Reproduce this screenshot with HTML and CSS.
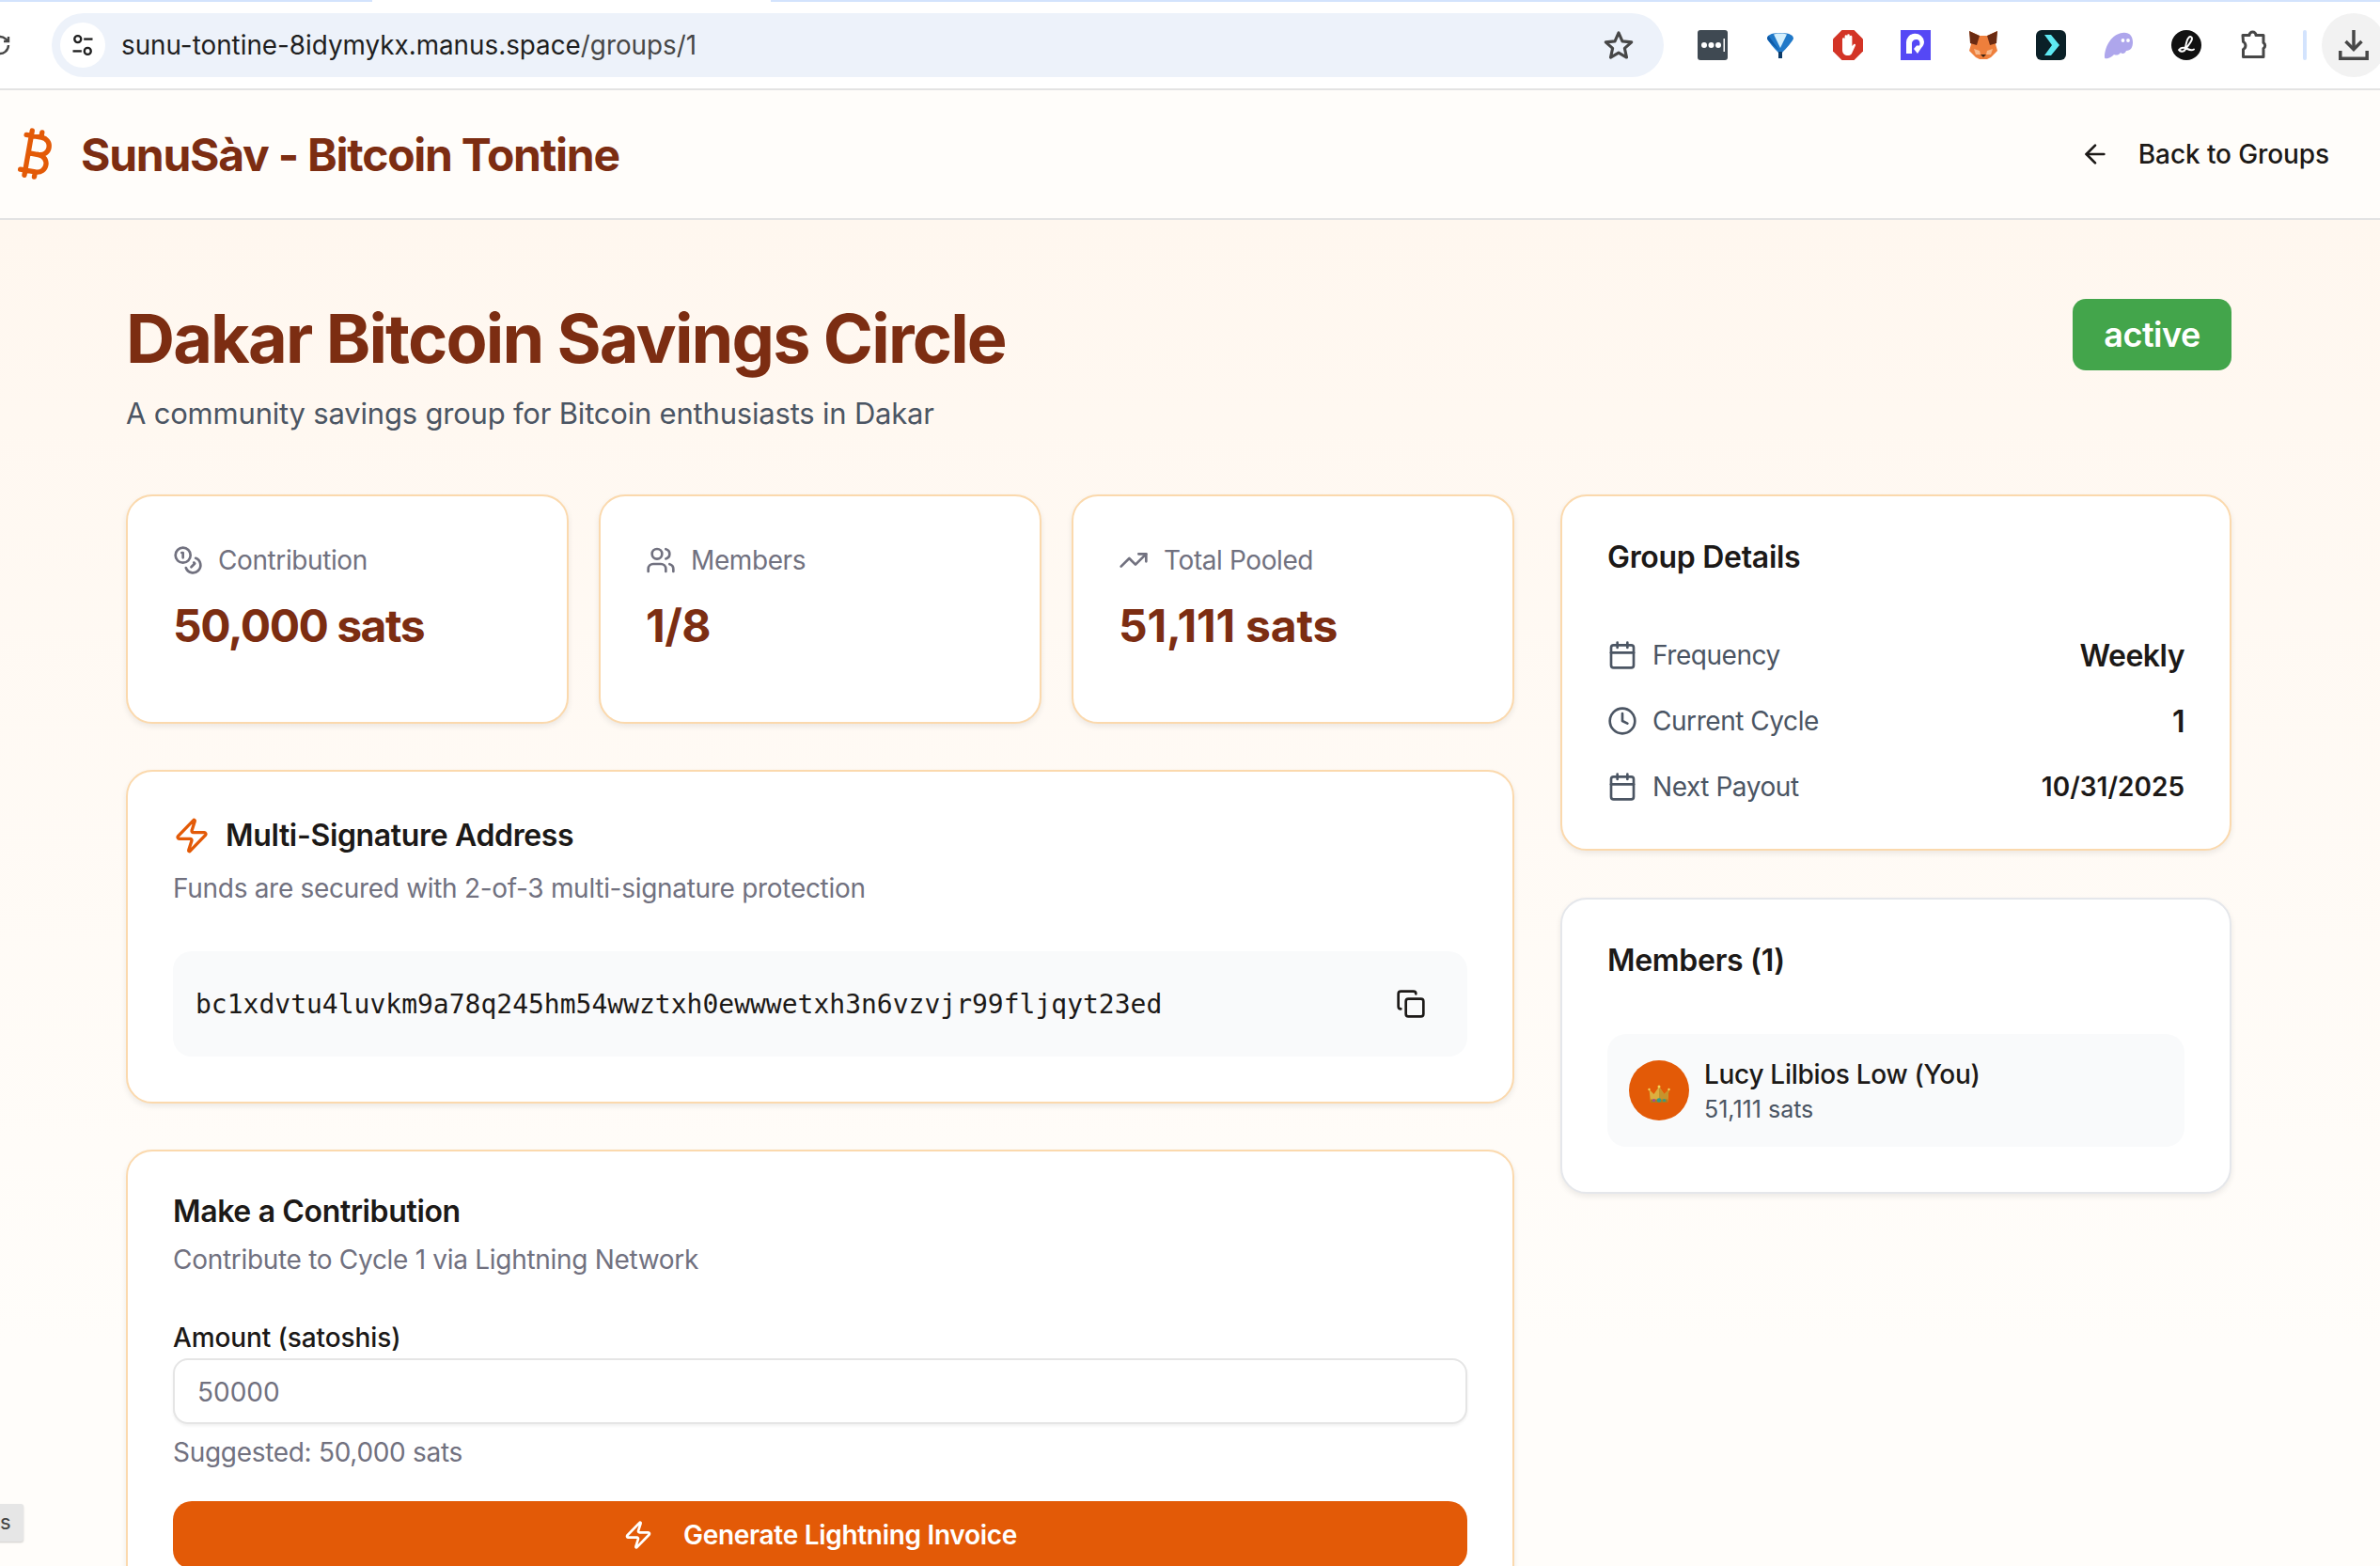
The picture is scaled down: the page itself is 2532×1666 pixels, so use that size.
FILE: index.html
```html
<!DOCTYPE html>
<html lang="en">
<head>
  <meta charset="UTF-8">
  <title>SunuSàv - Bitcoin Tontine</title>
  <link rel="stylesheet" href="styles.css">
</head>
<body>

  <!-- Browser toolbar -->
  <div class="tab-strip">
    <span class="tab-edge tab-edge-left"></span>
    <span class="tab-edge tab-edge-right"></span>
  </div>
  <div class="toolbar">
    <svg class="reload" viewBox="12 0 12 24" fill="none" stroke="#474747" stroke-width="2.4">
      <path d="M21 12a9 9 0 1 1-3-6.7L21 8"/><path d="M21 3v5h-5"/>
    </svg>
    <div class="address-bar">
      <span class="site-chip">
        <svg viewBox="0 0 24 24" fill="none" stroke="#1f1f1f" stroke-width="2">
          <circle cx="7.5" cy="6.5" r="3"/><path d="M13 6.5h8"/><circle cx="16.5" cy="17.5" r="3"/><path d="M3 17.5h8"/>
        </svg>
      </span>
      <span class="url">sunu-tontine-8idymykx.manus.space<span class="url-path">/groups/1</span></span>
      <svg class="star" viewBox="0 0 24 24" fill="none" stroke="#474747" stroke-width="2.2" stroke-linejoin="round">
        <path d="M12 2.8l2.8 6.3 6.9.7-5.2 4.6 1.5 6.8-6-3.5-6 3.5 1.5-6.8-5.2-4.6 6.9-.7z"/>
      </svg>
    </div>
    <div class="extensions">
      <svg viewBox="0 0 32 32">
        <rect width="32" height="32" rx="3" fill="#3f4952"/>
        <circle cx="7" cy="16" r="3" fill="#fff"/><circle cx="14.500" cy="16" r="3" fill="#fff"/><circle cx="22" cy="16" r="3" fill="#fff"/>
        <rect x="27.500" y="9" width="1.500" height="14" fill="#fff"/>
      </svg>
      <svg viewBox="0 0 32 32">
        <path d="M2 9c0-3 3-6 14-6s14 3 14 6c0 2-9 12-12 15v6h-4v-6C11 21 2 11 2 9z" fill="#1f78c8"/>
        <path d="M9 4.500c3-1.500 11-1.500 14 0L16 19z" fill="#d5effc"/>
        <path d="M2 9c0-1 .5-2 1.500-3L15 22C11 18 2 11 2 9z" fill="#0f5aa6"/>
        <path d="M14 23h4v7h-4z" fill="#0b3a68"/>
      </svg>
      <svg viewBox="0 0 32 32">
        <path d="M9.500 0h13L32 9.500v13L22.500 32h-13L0 22.500v-13z" fill="#d33426"/>
        <path d="M10 15V9.500a1.300 1.300 0 0 1 2.600 0V6.500a1.300 1.300 0 0 1 2.600 0V5.500a1.300 1.300 0 0 1 2.600 0v1.500a1.300 1.300 0 0 1 2.600 0V17l1.600-1.800c1.400-1 2.600.2 1.800 1.500L20 25c-1 1.500-2 2-4 2-3.500 0-6-2-6-6z" fill="#fff"/>
      </svg>
      <svg viewBox="0 0 32 32">
        <rect width="32" height="32" fill="#5548f5"/>
        <path d="M6 25V14a9.500 9.500 0 0 1 19-1.500c0 3-1.500 5-3 6.500l-4 6-4-5 3-3.500h3c1-2 .5-6-2.500-6.500-3-.5-5.500 1.500-5.500 4V25z" fill="#fff"/>
      </svg>
      <svg viewBox="0 0 32 32">
        <path d="M1 1l11 5h8l11-5-2 14 2 7-7 7-4 2h-8l-4-2-7-7 2-7z" fill="#ee7f3c"/>
        <path d="M1 1l11 5-3 10-7-2zM31 1L20 6l3 10 7-2z" fill="#6b2b12"/>
        <path d="M6 20l6 2 1 4-5 0zM26 20l-6 2-1 4 5 0z" fill="#f8b98c"/>
        <path d="M13 26h6l-3 3z" fill="#3a2415"/>
      </svg>
      <svg viewBox="0 0 32 32">
        <rect width="32" height="32" rx="6" fill="#0a2027"/>
        <path d="M9 5h7l9 11-9 11H9l8-11z" fill="#5ee9f2"/>
      </svg>
      <svg viewBox="0 0 32 32">
        <path d="M1 29c0-12 8-25 19-26 7-1 11 3 11 10 0 5-2 9-7 9-1 3-4 4-6 2-2 3-5 3-7 2-2 3-10 6-10 3z" fill="#aea6ec"/>
        <circle cx="20.500" cy="11" r="1.900" fill="#fff"/><circle cx="26" cy="11" r="1.900" fill="#fff"/>
      </svg>
      <svg viewBox="0 0 32 32">
        <circle cx="16" cy="16" r="16" fill="#111"/>
        <path d="M8 21c2 3 6 2 8-2 2-3 6-7 6-10 0-2-2-2.500-3.500-1C16 10 15 19 14.500 21c-.5 2-5 2.500-5.500 0-.3-2 4-3 7-1.500 3 1.500 5 3 8 1" fill="none" stroke="#fff" stroke-width="2" stroke-linecap="round"/>
      </svg>
      <svg viewBox="0 0 32 32" fill="none" stroke="#474747" stroke-width="3">
        <path d="M4 5.500h7a3.500 3.500 0 0 1 7 0h8v8a3.500 3.500 0 0 1 0 6v9H4.500v-8a4.500 4.500 0 0 0 0-8z" stroke-linejoin="round"/>
      </svg>
    </div>
    <span class="toolbar-divider"></span>
    <span class="download-btn">
      <svg viewBox="0 0 32 32" fill="none" stroke="#474747" stroke-width="3.500">
        <path d="M16 0v20"/><path d="M7.500 12l8.500 8.500 8.500-8.500"/><path d="M1.800 22v8.200h28.400V22"/>
      </svg>
    </span>
  </div>

  <!-- App header -->
  <header class="app-header">
    <div class="brand">
      <svg class="brand-icon" viewBox="0 0 24 24" fill="none" stroke="#e35a07" stroke-width="2" stroke-linecap="round" stroke-linejoin="round">
        <path d="M11.767 19.089c4.924.868 6.14-6.025 1.216-6.894m-1.216 6.894L5.860 18.047m5.908 1.042-.347 1.970m1.563-8.864c4.924.869 6.140-6.025 1.215-6.893m-1.215 6.893-3.940-.694m5.155-6.200L8.290 4.260m5.908 1.042.348-1.970M7.480 20.364l3.126-17.727"/>
      </svg>
      <span class="brand-name">SunuSàv - Bitcoin Tontine</span>
    </div>
    <a class="back-link">
      <svg class="icon" viewBox="0 0 24 24" fill="none" stroke="#1c1917" stroke-width="2" stroke-linecap="round" stroke-linejoin="round">
        <path d="m12 19-7-7 7-7"/><path d="M19 12H5"/>
      </svg>
      Back to Groups
    </a>
  </header>

  <main class="page">
    <section class="hero">
      <div>
        <h1>Dakar Bitcoin Savings Circle</h1>
        <p class="hero-sub">A community savings group for Bitcoin enthusiasts in Dakar</p>
      </div>
      <span class="badge">active</span>
    </section>

    <div class="layout">
      <div class="col-left">
        <div class="stats">
          <div class="card stat-card">
            <div class="stat-label">
              <svg class="icon" viewBox="0 0 24 24" fill="none" stroke="currentColor" stroke-width="2" stroke-linecap="round" stroke-linejoin="round">
                <circle cx="8" cy="8" r="6"/><path d="M18.090 10.370A6 6 0 1 1 10.340 18"/><path d="M7 6h1v4"/><path d="m16.710 13.880.7.710-2.820 2.820"/>
              </svg>
              Contribution
            </div>
            <div class="stat-value value-narrow">50,000 sats</div>
          </div>
          <div class="card stat-card">
            <div class="stat-label">
              <svg class="icon" viewBox="0 0 24 24" fill="none" stroke="currentColor" stroke-width="2" stroke-linecap="round" stroke-linejoin="round">
                <path d="M16 21v-2a4 4 0 0 0-4-4H6a4 4 0 0 0-4 4v2"/><circle cx="9" cy="7" r="4"/><path d="M22 21v-2a4 4 0 0 0-3-3.870"/><path d="M16 3.130a4 4 0 0 1 0 7.750"/>
              </svg>
              Members
            </div>
            <div class="stat-value">1/8</div>
          </div>
          <div class="card stat-card">
            <div class="stat-label">
              <svg class="icon" viewBox="0 0 24 24" fill="none" stroke="currentColor" stroke-width="2" stroke-linecap="round" stroke-linejoin="round">
                <path d="M22 7 13.500 15.500 8.500 10.500 2 17"/><path d="M16 7h6v6"/>
              </svg>
              Total Pooled
            </div>
            <div class="stat-value value-wide">51,111 sats</div>
          </div>
        </div>

        <div class="card panel">
          <h2 class="panel-title">
            <svg class="icon-lg" viewBox="0 0 24 24" fill="none" stroke="#e35a07" stroke-width="2" stroke-linecap="round" stroke-linejoin="round">
              <path d="M4 14a1 1 0 0 1-.78-1.630l9.900-10.200a.5.5 0 0 1 .86.460l-1.920 6.020A1 1 0 0 0 13 10h7a1 1 0 0 1 .78 1.630l-9.900 10.200a.5.5 0 0 1-.86-.460l1.920-6.020A1 1 0 0 0 11 14z"/>
            </svg>
            Multi-Signature Address
          </h2>
          <p class="panel-sub">Funds are secured with 2-of-3 multi-signature protection</p>
          <div class="address-box">
            <code>bc1xdvtu4luvkm9a78q245hm54wwztxh0ewwwetxh3n6vzvjr99fljqyt23ed</code>
            <svg class="icon" viewBox="0 0 24 24" fill="none" stroke="#1c1917" stroke-width="2" stroke-linecap="round" stroke-linejoin="round">
              <rect width="14" height="14" x="8" y="8" rx="2"/><path d="M4 16c-1.100 0-2-.9-2-2V4c0-1.100.9-2 2-2h10c1.100 0 2 .9 2 2"/>
            </svg>
          </div>
        </div>

        <div class="card panel">
          <h2 class="panel-title title-tight">Make a Contribution</h2>
          <p class="panel-sub sub-tight">Contribute to Cycle 1 via Lightning Network</p>
          <label class="field-label" for="amount">Amount (satoshis)</label>
          <input class="field-input" id="amount" type="text" placeholder="50000">
          <p class="field-hint">Suggested: 50,000 sats</p>
          <button class="primary-btn">
            <svg class="icon" viewBox="0 0 24 24" fill="none" stroke="#fff" stroke-width="2" stroke-linecap="round" stroke-linejoin="round">
              <path d="M4 14a1 1 0 0 1-.78-1.630l9.900-10.200a.5.5 0 0 1 .86.460l-1.920 6.020A1 1 0 0 0 13 10h7a1 1 0 0 1 .78 1.630l-9.900 10.200a.5.5 0 0 1-.86-.460l1.920-6.020A1 1 0 0 0 11 14z"/>
            </svg>
            Generate Lightning Invoice
          </button>
        </div>
      </div>

      <aside class="col-right">
        <div class="card side-card">
          <h2 class="side-title">Group Details</h2>
          <div class="detail-rows">
            <div class="detail-row">
              <span class="detail-label">
                <svg class="icon" viewBox="0 0 24 24" fill="none" stroke="currentColor" stroke-width="2" stroke-linecap="round" stroke-linejoin="round">
                  <path d="M8 2v4"/><path d="M16 2v4"/><rect width="18" height="18" x="3" y="4" rx="2"/><path d="M3 10h18"/>
                </svg>
                Frequency
              </span>
              <span class="detail-value value-lg">Weekly</span>
            </div>
            <div class="detail-row">
              <span class="detail-label">
                <svg class="icon" viewBox="0 0 24 24" fill="none" stroke="currentColor" stroke-width="2" stroke-linecap="round" stroke-linejoin="round">
                  <circle cx="12" cy="12" r="10"/><path d="M12 6v6l4 2"/>
                </svg>
                Current Cycle
              </span>
              <span class="detail-value value-lg">1</span>
            </div>
            <div class="detail-row">
              <span class="detail-label">
                <svg class="icon" viewBox="0 0 24 24" fill="none" stroke="currentColor" stroke-width="2" stroke-linecap="round" stroke-linejoin="round">
                  <path d="M8 2v4"/><path d="M16 2v4"/><rect width="18" height="18" x="3" y="4" rx="2"/><path d="M3 10h18"/>
                </svg>
                Next Payout
              </span>
              <span class="detail-value">10/31/2025</span>
            </div>
          </div>
        </div>

        <div class="card side-card members-card">
          <h2 class="side-title">Members (1)</h2>
          <div class="member">
            <span class="avatar">
              <svg viewBox="0 0 24 20">
                <path d="M1.500 5l5 5 5.500-8 5.500 8 5-5L21 19H3z" fill="#dcae3e"/>
                <path d="M12 2l5.500 8 5-5L21 19h-9z" fill="#c6932c"/>
                <path d="M3 15.500h18L21 19H3z" fill="#a97c22"/>
                <circle cx="12" cy="16.500" r="2.200" fill="#2e9c8a"/><circle cx="6.500" cy="16.500" r="1.500" fill="#a2469c"/><circle cx="17.500" cy="16.500" r="1.500" fill="#2e9c8a"/>
                <circle cx="12" cy="2" r="1.500" fill="#f3d35a"/><circle cx="1.500" cy="5" r="1.200" fill="#f3d35a"/><circle cx="22.500" cy="5" r="1.200" fill="#f3d35a"/>
              </svg>
            </span>
            <div>
              <div class="member-name">Lucy Lilbios Low (You)</div>
              <div class="member-sats">51,111 sats</div>
            </div>
          </div>
        </div>
      </aside>
    </div>
  </main>

  <div class="corner-tip">s</div>

</body>
</html>
```

FILE: styles.css
```css
* {
  box-sizing: border-box;
}

html, body {
  margin: 0;
  height: 1666px;
  overflow: hidden;
}

body {
  font-family: Inter, "Noto Sans", sans-serif;
  color: #1c1917;
  background: #fff;
}

h1, h2, p {
  margin: 0;
}

.icon {
  width: 32px;
  height: 32px;
  flex: none;
}

.icon-lg {
  width: 40px;
  height: 40px;
  flex: none;
}

/* Browser toolbar */
.tab-strip {
  display: flex;
  justify-content: space-between;
  height: 2px;
}

.tab-edge {
  background: #d3e3fd;
  height: 2px;
}

.tab-edge-left {
  width: 396px;
}

.tab-edge-right {
  width: 1712px;
}

.toolbar {
  display: flex;
  align-items: center;
  height: 92px;
  background: #fff;
}

.reload {
  width: 12px;
  height: 30px;
  flex: none;
}

.address-bar {
  display: flex;
  align-items: center;
  width: 1715px;
  height: 68px;
  flex: none;
  margin-left: 43px;
  padding-left: 9px;
  border-radius: 34px;
  background: #edf2fa;
}

.site-chip {
  display: flex;
  align-items: center;
  justify-content: center;
  width: 48px;
  height: 48px;
  flex: none;
  border-radius: 50%;
  background: #fff;
}

.site-chip svg {
  width: 28px;
  height: 28px;
}

.url {
  margin-left: 17px;
  font-size: 27.800px;
  color: #1f1f1f;
}

.url-path {
  color: #474747;
}

.star {
  width: 34px;
  height: 34px;
  margin-left: auto;
  margin-right: 31px;
}

.extensions {
  display: flex;
  flex: none;
  gap: 40px;
  margin-left: 36px;
}

.extensions svg {
  width: 32px;
  height: 32px;
  display: block;
}

.toolbar-divider {
  width: 4px;
  height: 32px;
  flex: none;
  margin-left: 36px;
  border-radius: 2px;
  background: #d3e3fd;
}

.download-btn {
  display: flex;
  align-items: center;
  justify-content: center;
  width: 68px;
  height: 68px;
  flex: none;
  margin-left: 16px;
  border-radius: 50%;
  background: #f2f2f2;
}

.download-btn svg {
  width: 32px;
  height: 32px;
}

/* App header */
.app-header {
  display: flex;
  align-items: center;
  justify-content: space-between;
  height: 140px;
  padding: 0 54px 0 6px;
  background: #fffdfa;
  border-top: 2px solid #e3e3e3;
  border-bottom: 2px solid #e3e3e3;
}

.brand {
  display: flex;
  align-items: center;
  gap: 16px;
}

.brand-icon {
  width: 64px;
  height: 64px;
}

.brand-name {
  font-size: 48px;
  font-weight: 700;
  color: #7c2d12;
  letter-spacing: -1.250px;
}

.back-link {
  display: flex;
  align-items: center;
  gap: 30px;
  font-size: 28px;
  font-weight: 500;
  letter-spacing: -0.100px;
}

/* Page */
.page {
  height: 1432px;
  padding: 84px 158px 0 134px;
  background: linear-gradient(180deg, #fff7ef 0, #fffdfa 1200px);
}

.hero {
  display: flex;
  justify-content: space-between;
  align-items: flex-start;
  margin-bottom: 66px;
}

h1 {
  font-size: 72px;
  line-height: 84px;
  font-weight: 700;
  color: #7c2d12;
  letter-spacing: -1.850px;
}

.hero-sub {
  margin-top: 18px;
  font-size: 31px;
  line-height: 40px;
  letter-spacing: -0.200px;
  color: #4b5563;
}

.badge {
  display: flex;
  align-items: center;
  justify-content: center;
  width: 169px;
  height: 76px;
  border-radius: 14px;
  background: #43a54b;
  color: #fff;
  font-size: 36px;
  font-weight: 600;
  letter-spacing: -0.500px;
}

.layout {
  display: grid;
  grid-template-columns: 1477px 714px;
  gap: 49px;
}

.col-left {
  display: flex;
  flex-direction: column;
  gap: 49px;
}

.col-right {
  display: flex;
  flex-direction: column;
  gap: 50px;
}

.stats {
  display: grid;
  grid-template-columns: repeat(3, 1fr);
  gap: 32px;
}

.card {
  background: #fff;
  border: 2px solid #fbd9ad;
  border-radius: 28px;
  box-shadow: 0 3px 6px rgba(0, 0, 0, 0.08);
}

.stat-card {
  height: 244px;
  padding: 48px 48px 0;
}

.stat-label {
  display: flex;
  align-items: center;
  gap: 16px;
  font-size: 28px;
  line-height: 40px;
  letter-spacing: -0.400px;
  color: #71717f;
}

.stat-value {
  margin-top: 20px;
  font-size: 48px;
  line-height: 60px;
  font-weight: 700;
  color: #7c2d12;
  letter-spacing: -0.500px;
}

.value-narrow {
  letter-spacing: -1.500px;
}

.value-wide {
  letter-spacing: -0.200px;
}

.panel {
  padding: 48px;
}

.panel-title {
  display: flex;
  align-items: center;
  gap: 16px;
  font-size: 32px;
  line-height: 40px;
  font-weight: 600;
  letter-spacing: -0.350px;
}

.title-tight {
  line-height: 32px;
}

.panel-sub {
  margin-top: 16px;
  font-size: 28px;
  line-height: 40px;
  letter-spacing: -0.300px;
  color: #71717f;
}

.sub-tight {
  margin-top: 15px;
}

.address-box {
  display: flex;
  align-items: center;
  justify-content: space-between;
  height: 112px;
  margin-top: 47px;
  padding: 0 44px 0 24px;
  border-radius: 20px;
  background: #f9fafb;
}

.address-box code {
  font-family: "DejaVu Sans Mono", monospace;
  font-size: 28px;
}

.field-label {
  display: block;
  margin-top: 43px;
  font-size: 28px;
  line-height: 40px;
  font-weight: 500;
  letter-spacing: -0.100px;
}

.field-input {
  display: block;
  width: 100%;
  height: 70px;
  margin-top: 2px;
  padding: 2px 24px 0;
  border: 2px solid #e5e5e5;
  border-radius: 16px;
  background: #fff;
  box-shadow: 0 2px 3px rgba(0, 0, 0, 0.06);
  font-family: inherit;
  font-size: 28px;
}

.field-input::placeholder {
  color: #71717f;
  opacity: 1;
}

.field-hint {
  margin-top: 10px;
  font-size: 28px;
  line-height: 40px;
  letter-spacing: -0.300px;
  color: #71717f;
}

.primary-btn {
  display: flex;
  align-items: center;
  justify-content: center;
  gap: 32px;
  width: 100%;
  height: 72px;
  margin-top: 32px;
  border: none;
  border-radius: 20px;
  background: #e35a07;
  color: #fff;
  font-family: inherit;
  font-size: 28px;
  font-weight: 600;
  letter-spacing: -0.300px;
}

.side-card {
  padding: 48px 48px 44px;
}

.members-card {
  padding-bottom: 48px;
  border-color: #e5e7eb;
}

.side-title {
  font-size: 32px;
  line-height: 34px;
  font-weight: 600;
  letter-spacing: -0.300px;
}

.detail-rows {
  display: flex;
  flex-direction: column;
  gap: 26px;
  margin-top: 65px;
}

.detail-row {
  display: flex;
  align-items: center;
  justify-content: space-between;
  height: 44px;
}

.detail-label {
  display: flex;
  align-items: center;
  gap: 16px;
  font-size: 28px;
  letter-spacing: -0.450px;
  color: #4b5563;
}

.detail-value {
  font-size: 28px;
  font-weight: 600;
}

.value-lg {
  font-size: 32px;
  letter-spacing: -0.500px;
}

.member {
  display: flex;
  align-items: center;
  gap: 16px;
  height: 120px;
  margin-top: 61px;
  padding-left: 23px;
  border-radius: 20px;
  background: #f9fafb;
}

.avatar {
  display: flex;
  align-items: center;
  justify-content: center;
  width: 64px;
  height: 64px;
  flex: none;
  border-radius: 50%;
  background: #e35a07;
}

.avatar svg {
  width: 24px;
  height: 20px;
  margin-top: 7px;
}

.member-name {
  margin-top: 1px;
  font-size: 28px;
  line-height: 36px;
  font-weight: 500;
  letter-spacing: -0.300px;
}

.member-sats {
  margin-top: 3px;
  font-size: 25px;
  line-height: 32px;
  color: #4b5563;
}

.corner-tip {
  position: absolute;
  left: -2px;
  top: 1600px;
  width: 27px;
  height: 40px;
  padding-left: 2px;
  background: #e6e6e6;
  border-radius: 0 3px 3px 0;
  box-shadow: 0 1px 2px rgba(0, 0, 0, 0.2);
  font-size: 22px;
  line-height: 38px;
  color: #444;
}
```
